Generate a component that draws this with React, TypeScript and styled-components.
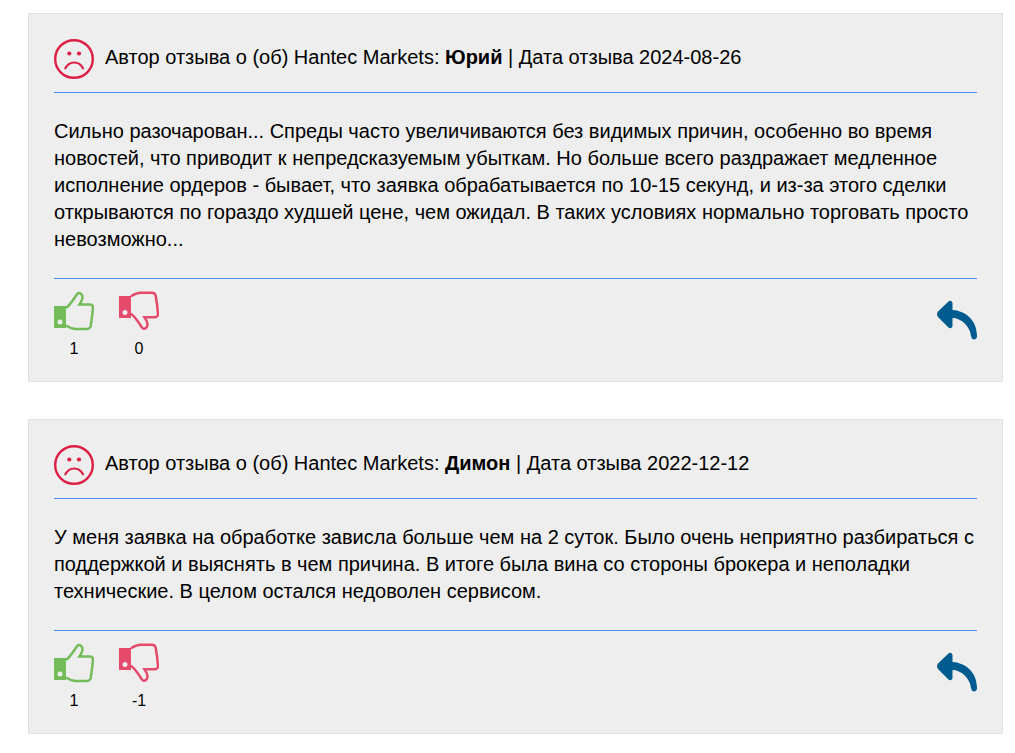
import React from "react";
import styled, { createGlobalStyle } from "styled-components";

const Global = createGlobalStyle`
  html, body { margin: 0; padding: 0; background: #fff; }
  body { font-family: "Liberation Sans", Arial, sans-serif; color: #000; }
`;
const Page = styled.div`
  padding: 13px 12px 18px 28px;
  display: flex;
  flex-direction: column;
  gap: 37px;
`;
const Card = styled.article`
  background: #eee;
  border: 1px solid #e2e2e2;
  padding: 25px 25px 0;
`;
const Header = styled.header`
  display: flex;
  align-items: center;
  gap: 11px;
  height: 40px;
  padding-bottom: 13px;
  border-bottom: 1px solid #4b8ef5;
  font-size: 20px;
  line-height: 27px;
`;
const HeaderText = styled.span`
  position: relative;
  top: -2px;
`;
const Body = styled.p`
  margin: 0;
  padding: 25px 0;
  font-size: 20px;
  line-height: 27px;
  border-bottom: 1px solid #4b8ef5;
`;
const Footer = styled.footer`
  display: flex;
  justify-content: space-between;
  padding-top: 12px;
  height: 102px;
  box-sizing: border-box;
`;
const Votes = styled.div`
  display: flex;
  gap: 25px;
`;
const Vote = styled.div`
  display: flex;
  flex-direction: column;
  align-items: center;
  width: 40px;
  font-size: 16px;
  line-height: 18px;
  gap: 9px;
`;
const Reply = styled.svg`
  display: block;
  width: 40px;
  height: 40px;
  margin-top: 9px;
  color: #005b8e;
`;
const Icon = styled.svg`
  display: block;
  width: 40px;
  height: 40px;
  flex: none;
`;

const Sad = () => (
  <Icon viewBox="0 0 40 40" fill="none">
    <circle cx="20" cy="20" r="18.8" stroke="#dc1f45" strokeWidth="2.4" />
    <circle cx="15.300" cy="14.500" r="2.100" fill="#dc1f45" />
    <circle cx="25" cy="14.500" r="2.100" fill="#dc1f45" />
    <path d="M11.300 29.300C13.500 25.500 16.500 23.500 20.200 23.500C23.800 23.500 27 25.500 29 29.300" stroke="#dc1f45" strokeWidth="2.200" strokeLinecap="round" />
  </Icon>
);

const thumbOutline =
  "M12 17C15.500 14.500 18.500 10 21.500 5.500C23 2.500 24.300 1.700 25.500 2C27.800 2.500 28.800 5 28.300 7.500C27.800 9.500 27 11.500 25.500 13.500L36 13.500C38.500 13.500 39.200 15.500 38.900 17.500C39.100 19 38.300 20 38.500 21.500C38.700 23 37.900 24 38.100 25.500C38.300 27 37.300 28 37.500 29.500C37.700 31 36.700 32.500 36.900 34C36.700 36.500 35 38 32.500 38L22 38C18 38 15 36.500 12 34.500";

const ThumbUp = () => (
  <Icon viewBox="0 0 40 40" fill="none">
    <path fillRule="evenodd" d="M0 15h12v22H0zM6 28.500a2.500 2.500 0 1 0 0 5 2.500 2.500 0 0 0 0-5z" fill="#74bc5a" />
    <path d={thumbOutline} stroke="#74bc5a" strokeWidth="2.500" />
  </Icon>
);

const ThumbDown = () => (
  <Icon viewBox="0 0 40 40" fill="none">
    <path fillRule="evenodd" d="M0 5h12v22H0zM6 19a2.500 2.500 0 1 0 0 5 2.500 2.500 0 0 0 0-5z" fill="#e54a6b" />
    <path d={thumbOutline} transform="matrix(1 0 0 -1 0 39.700)" stroke="#e54a6b" strokeWidth="2.500" />
  </Icon>
);

const ReplyIcon = () => (
  <Reply viewBox="0 0 40 40">
    <path
      fill="currentColor"
      d="M1 11.500L11.500 1.500C13 0 15.500 1 15.500 3.200V10C27 10.500 40 19 40 36C40 38 38.800 39.500 37 39.500C35.200 39.500 34.500 38 34 36C33 26 24 18 15.500 18V25.500C15.500 28 13 29 11.500 27.500L1 17C-0.300 15.500 -0.300 13 1 11.500Z"
    />
  </Reply>
);

type Review = { name: string; date: string; text: string; up: number; down: number };

const reviews: Review[] = [
  {
    name: "Юрий",
    date: "2024-08-26",
    text: "Сильно разочарован... Спреды часто увеличиваются без видимых причин, особенно во время новостей, что приводит к непредсказуемым убыткам. Но больше всего раздражает медленное исполнение ордеров - бывает, что заявка обрабатывается по 10-15 секунд, и из-за этого сделки открываются по гораздо худшей цене, чем ожидал. В таких условиях нормально торговать просто невозможно...",
    up: 1,
    down: 0,
  },
  {
    name: "Димон",
    date: "2022-12-12",
    text: "У меня заявка на обработке зависла больше чем на 2 суток. Было очень неприятно разбираться с поддержкой и выяснять в чем причина. В итоге была вина со стороны брокера и неполадки технические. В целом остался недоволен сервисом.",
    up: 1,
    down: -1,
  },
];

export default function App() {
  return (
    <>
      <Global />
      <Page>
        {reviews.map((r) => (
          <Card key={r.name}>
            <Header>
              <Sad />
              <HeaderText>
                Автор отзыва о (об) Hantec Markets: <b>{r.name}</b> | Дата отзыва {r.date}
              </HeaderText>
            </Header>
            <Body>{r.text}</Body>
            <Footer>
              <Votes>
                <Vote>
                  <ThumbUp />
                  <span>{r.up}</span>
                </Vote>
                <Vote>
                  <ThumbDown />
                  <span>{r.down}</span>
                </Vote>
              </Votes>
              <ReplyIcon />
            </Footer>
          </Card>
        ))}
      </Page>
    </>
  );
}
